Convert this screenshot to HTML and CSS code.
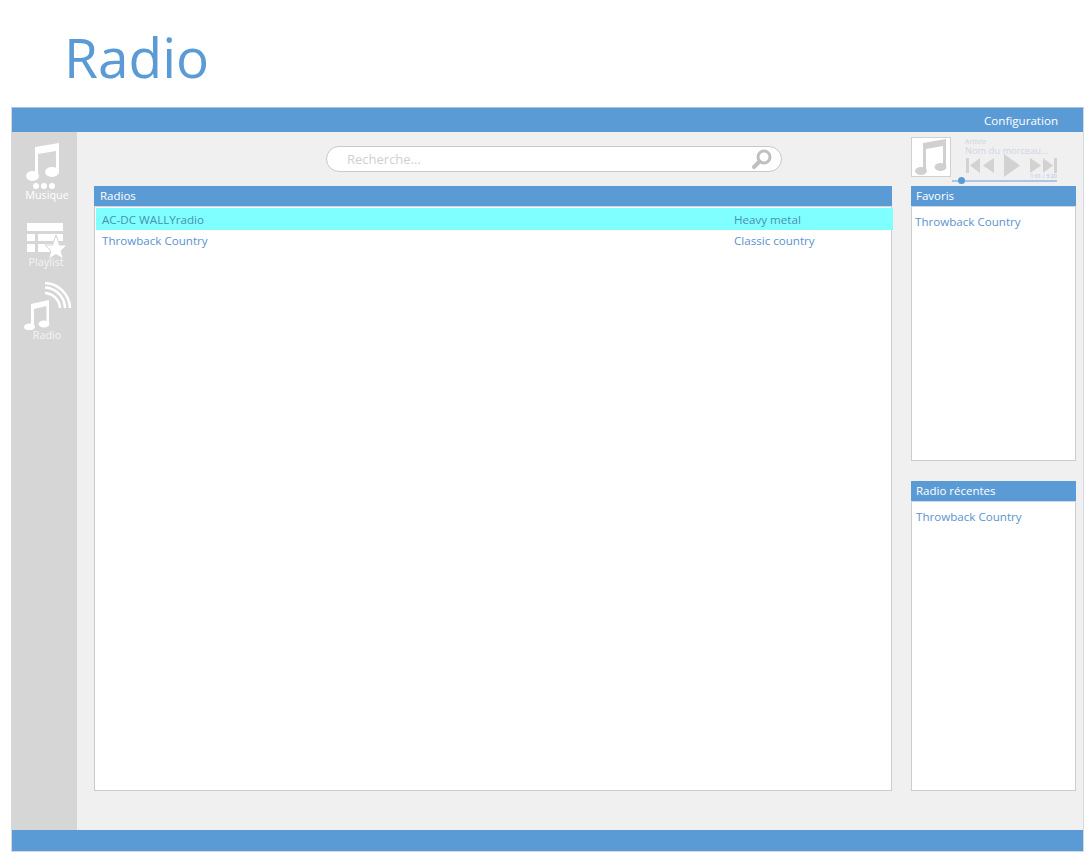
FILE: index.html
```html
<!DOCTYPE html>
<html lang="fr">
<head>
	<meta charset="UTF-8">
	<title>Radio</title>
	<link rel="stylesheet" href="styles.css">
</head>
<body>
	<h1 class="page_title">Radio</h1>
	<div class="app">
		<div class="top_bar"><span class="config">Configuration</span></div>
		<div class="middle">
			<div class="side_nav">
				<div class="nav_item nav_music">
					<svg class="nav_icon" width="36" height="47" viewBox="0 0 36 47">
						<g fill="#fff">
							<path d="M9 4 L33 0 V29 H30 V8 L12 11 V33 H9 Z"/>
							<ellipse cx="6.500" cy="33" rx="6.500" ry="5"/>
							<ellipse cx="26" cy="29" rx="7" ry="5"/>
							<circle cx="10" cy="43" r="3"/>
							<circle cx="18" cy="43" r="3"/>
							<circle cx="26" cy="43" r="3"/>
						</g>
					</svg>
					<span>Musique</span>
				</div>
				<div class="nav_item nav_playlist">
					<svg class="nav_icon" width="42" height="38" viewBox="0 0 42 38">
						<g fill="#fff">
							<rect x="0" y="1" width="36" height="8"/>
							<rect x="0" y="12" width="8" height="7"/>
							<rect x="11" y="12" width="25" height="7"/>
							<rect x="0" y="22" width="8" height="8"/>
							<rect x="11" y="22" width="16" height="8"/>
							<path d="M29 13 L32.500 23 H40 L34 29 L36.500 37 L29 32.500 L21.500 37 L24 29 L18 23 H25.500 Z" stroke="#d6d6d6"/>
						</g>
					</svg>
					<span>Playlist</span>
				</div>
				<div class="nav_item nav_radio">
					<svg class="nav_icon" width="48" height="48" viewBox="0 0 48 48">
						<g fill="#fff">
							<path d="M7 22 L25 18 V42 H22.500 V24 L10 27 V46 H7 Z"/>
							<ellipse cx="5.500" cy="45" rx="5.500" ry="3.500"/>
							<ellipse cx="20" cy="42" rx="5.500" ry="3.500"/>
						</g>
						<g fill="none" stroke="#fff" stroke-width="2.500">
							<path d="M21 11 A16 16 0 0 1 36 26"/>
							<path d="M21 5.500 A21 21 0 0 1 41 26"/>
							<path d="M21 1 A26 26 0 0 1 46 26"/>
						</g>
					</svg>
					<span>Radio</span>
				</div>
			</div>
			<div class="main">
				<div class="center">
					<div class="search_row">
						<div class="search">
							<span class="search_text">Recherche...</span>
							<svg width="22" height="22" viewBox="0 0 22 22">
								<circle cx="13" cy="9" r="6" fill="#fff" stroke="#bfbfbf" stroke-width="3"/>
								<path d="M8.500 13.500 L3 19" stroke="#bfbfbf" stroke-width="4" stroke-linecap="round"/>
							</svg>
						</div>
					</div>
					<div class="panel panel_radios">
						<div class="panel_head">Radios</div>
						<div class="panel_body">
							<div class="radio_row selected">
								<span class="radio_name">AC-DC WALLYradio</span>
								<span class="radio_genre">Heavy metal</span>
							</div>
							<div class="radio_row">
								<span class="radio_name">Throwback Country</span>
								<span class="radio_genre">Classic country</span>
							</div>
						</div>
					</div>
				</div>
				<div class="right">
					<div class="player">
						<div class="cover">
							<svg width="32" height="36" viewBox="0 0 32 36">
								<g fill="#d0d0d0">
									<path d="M8 4 L31 0 V28 H28 V7 L11 10 V32 H8 Z"/>
									<ellipse cx="6" cy="32" rx="6" ry="4"/>
									<ellipse cx="25.500" cy="28" rx="6" ry="4"/>
								</g>
							</svg>
						</div>
						<div class="player_info">
							<div class="artist">Artiste</div>
							<div class="track">Nom du morceau...</div>
							<svg class="controls" width="94" height="24" viewBox="0 0 94 24">
								<g fill="#d2d2d2">
									<rect x="1" y="5" width="3" height="15"/>
									<path d="M15 5 V20 L5 12.500 Z"/>
									<path d="M29 5 V20 L18 12.500 Z"/>
									<path d="M39 1 L55 12.500 L39 24 Z"/>
									<path d="M65 5 L76 12.500 L65 20 Z"/>
									<path d="M78 5 L88 12.500 L78 20 Z"/>
									<rect x="89" y="5" width="3" height="15"/>
								</g>
							</svg>
						</div>
						<div class="seek">
							<span class="seek_knob"></span>
							<span class="seek_time">1:01 / 3:20</span>
						</div>
					</div>
					<div class="panel panel_fav">
						<div class="panel_head">Favoris</div>
						<div class="panel_body side_list">Throwback Country</div>
					</div>
					<div class="panel panel_recent">
						<div class="panel_head">Radio récentes</div>
						<div class="panel_body side_list">Throwback Country</div>
					</div>
				</div>
			</div>
		</div>
		<div class="bottom_bar"></div>
	</div>
</body>
</html>
```

FILE: styles.css
```css
*{
	margin: 0;
	padding: 0;
	box-sizing: border-box;
}
body{
	background-color: #fff;
	font-family: "Open Sans", "Noto Sans", sans-serif;
	font-size: 11px;
	color: #5b92cf;
}
.page_title{
	height: 107px;
	padding: 21px 0 0 64px;
	font-size: 55px;
	line-height: 72px;
	font-weight: 400;
	color: #5b9bd5;
}
.app{
	width: 1073px;
	height: 745px;
	margin-left: 11px;
	display: flex;
	flex-direction: column;
	border: 1px solid #d4d9df;
	border-top-color: #a9c4e2;
}
.top_bar{
	height: 24px;
	flex: none;
	background-color: #5b9bd5;
	display: flex;
	align-items: center;
	justify-content: flex-end;
	padding-right: 25px;
	color: #fff;
	font-size: 11.600px;
}
.middle{
	flex: 1;
	display: flex;
	background-color: #f0f0f0;
}
.side_nav{
	width: 65px;
	flex: none;
	background-color: #d6d6d6;
	color: #fff;
	font-size: 10.800px;
	line-height: 12px;
}
.nav_item{
	display: flex;
	flex-direction: column;
}
.nav_item span{
	text-align: center;
	width: 70px;
}
.nav_icon{
	display: block;
}
.nav_music{
	padding: 11px 0 0 14px;
	width: 65px;
	align-items: flex-start;
}
.nav_music span{
	margin: -1px 0 0 -14px;
}
.nav_playlist{
	padding: 21px 0 0 15px;
}
.nav_playlist span{
	margin: -4px 0 0 -16px;
	color: #f4f4f4;
}
.nav_radio{
	padding: 14px 0 0 12px;
}
.nav_radio span{
	margin: -1px 0 0 -12px;
	color: #f4f4f4;
}
.main{
	flex: 1;
	display: flex;
	padding: 0 7px 39px 17px;
	gap: 19px;
}
.center{
	width: 798px;
	display: flex;
	flex-direction: column;
}
.search_row{
	display: flex;
	height: 54px;
	padding: 14px 0 0 232px;
}
.search{
	width: 456px;
	height: 26px;
	background-color: #fff;
	border: 1px solid #c9c9c9;
	border-radius: 13px;
	display: flex;
	align-items: center;
	justify-content: space-between;
	padding: 0 8px 0 20px;
}
.search_text{
	font-size: 13px;
	color: #d0d0d0;
}
.panel{
	background-color: #fff;
	border: 1px solid #c9ccd0;
	border-top: none;
	display: flex;
	flex-direction: column;
}
.panel_head{
	height: 21px;
	flex: none;
	background-color: #5b9bd5;
	border-bottom: 1px solid #cfd8e2;
	color: #fff;
	font-size: 11.500px;
	line-height: 20px;
	margin: 0 -1px;
	padding-left: 6px;
}
.right .panel_head{
	padding-left: 5px;
}
.panel_radios{
	flex: 1;
}
.panel_body{
	flex: 1;
	font-size: 11.600px;
}
.radio_row{
	display: flex;
	height: 21px;
	align-items: center;
	padding-left: 7px;
}
.radio_row.selected{
	background-color: #7fffff;
	color: #4a8fb0;
	margin: 1px -2px 0 1px;
	height: 22px;
	padding-left: 6px;
}
.radio_name{
	width: 632px;
}
.side_list{
	padding: 7px 0 0 3px;
}
.right{
	width: 165px;
	display: flex;
	flex-direction: column;
}
.player{
	height: 54px;
	flex: none;
	padding-top: 5px;
	position: relative;
	display: flex;
	gap: 14px;
}
.cover{
	width: 40px;
	height: 40px;
	background-color: #fff;
	border: 1px solid #d0d0d0;
	display: flex;
	align-items: center;
	justify-content: center;
}
.player_info{
	width: 100px;
	color: #cfd6e0;
}
.artist{
	font-size: 7px;
	line-height: 8px;
	margin-top: 1px;
}
.track{
	font-size: 9.300px;
	line-height: 9px;
	white-space: nowrap;
}
.controls{
	display: block;
	margin-top: -2px;
}
/* barre de lecture, posee sur le lecteur */
.seek{
	position: absolute;
	left: 41px;
	top: 48px;
	width: 105px;
	height: 2px;
	background-color: #a9c6e6;
}
.seek_knob{
	position: absolute;
	left: 6px;
	top: -3px;
	width: 7px;
	height: 7px;
	border-radius: 50%;
	background-color: #5b9bd5;
}
.seek_time{
	position: absolute;
	right: 0;
	top: -6px;
	font-size: 5.500px;
	line-height: 5px;
	white-space: nowrap;
	color: #a9c6e6;
}
.panel_fav{
	height: 275px;
	flex: none;
}
.panel_recent{
	flex: 1;
	margin-top: 20px;
}
.panel_recent .side_list{
	padding-left: 4px;
}
.bottom_bar{
	height: 21px;
	flex: none;
	background-color: #5b9bd5;
}
```
